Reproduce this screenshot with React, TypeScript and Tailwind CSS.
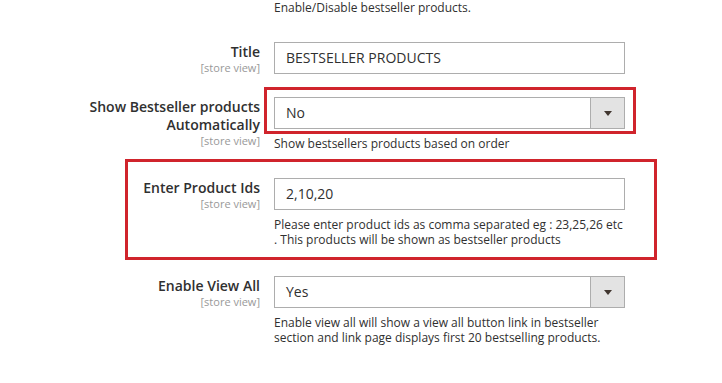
import React from 'react';

const font = { fontFamily: '"Open Sans", "Liberation Sans", sans-serif' };

function Label({ lines, pt = 'pt-[1px]' }: { lines: string[]; pt?: string }) {
  return (
    <div className={`w-[260px] shrink-0 text-right ${pt}`}>
      {lines.map((l) => (
        <div key={l} className="text-[14px] leading-[18px] font-semibold text-[#303030]">
          {l}
        </div>
      ))}
      <div className="text-[11px] leading-[13px] text-[#999999]">[store view]</div>
    </div>
  );
}

function TextInput({ value }: { value: string }) {
  return (
    <div className="h-[32px] w-[351px] border border-[#adadad] bg-white px-[11px] text-[14px] leading-[30px] text-[#303030]">
      {value}
    </div>
  );
}

function Select({ value }: { value: string }) {
  return (
    <div className="flex h-[32px] w-[351px] border border-[#adadad] bg-white">
      <div className="flex-1 px-[11px] text-[14px] leading-[30px] text-[#303030]">{value}</div>
      <div className="flex w-[34px] items-center justify-center border-l border-[#adadad] bg-[#e3e3e3]">
        <svg width="8" height="5" viewBox="0 0 8 5">
          <path d="M0 0 H8 L4 5 Z" fill="#41362f" />
        </svg>
      </div>
    </div>
  );
}

function Help({ children, mt = 'mt-[7px]' }: { children: React.ReactNode; mt?: string }) {
  return <div className={`${mt} text-[12px] leading-[15px] text-[#303030]`}>{children}</div>;
}

export default function App() {
  return (
    <div className="h-[383px] w-[722px] overflow-hidden bg-white" style={font}>
      <div className="ml-[274px] pt-[1px] text-[12px] leading-[13px] text-[#303030]">
        Enable/Disable bestseller products.
      </div>

      {/* Title */}
      <div className="mt-[28px] flex">
        <Label lines={['Title']} pt="pt-[1px]" />
        <div className="ml-[14px]">
          <TextInput value="BESTSELLER PRODUCTS" />
        </div>
      </div>

      {/* Show automatically */}
      <div className="mt-[23px] flex">
        <Label lines={['Show Bestseller products', 'Automatically']} />
        <div className="ml-[14px]">
          <div className="-ml-[10px] -mt-[10px] w-[372px] border-[3px] border-[#d0242c] pb-[2px] pl-[7px] pr-[8px] pt-[7px]">
            <Select value="No" />
          </div>
          <Help mt="mt-[2px]">Show bestsellers products based on order</Help>
        </div>
      </div>

      {/* Product ids */}
      <div className="ml-[125px] mt-[8px] w-[532px] border-[3px] border-[#d0242c] pb-[10px] pt-[16px]">
        <div className="-ml-[128px] flex">
          <Label lines={['Enter Product Ids']} />
          <div className="ml-[14px]">
            <TextInput value="2,10,20" />
            <Help>
              Please enter product ids as comma separated eg : 23,25,26 etc
              <br />. This products will be shown as bestseller products
            </Help>
          </div>
        </div>
      </div>

      {/* View all */}
      <div className="mt-[16px] flex">
        <Label lines={['Enable View All']} />
        <div className="ml-[14px]">
          <Select value="Yes" />
          <Help>
            Enable view all will show a view all button link in bestseller
            <br />
            section and link page displays first 20 bestselling products.
          </Help>
        </div>
      </div>
    </div>
  );
}
